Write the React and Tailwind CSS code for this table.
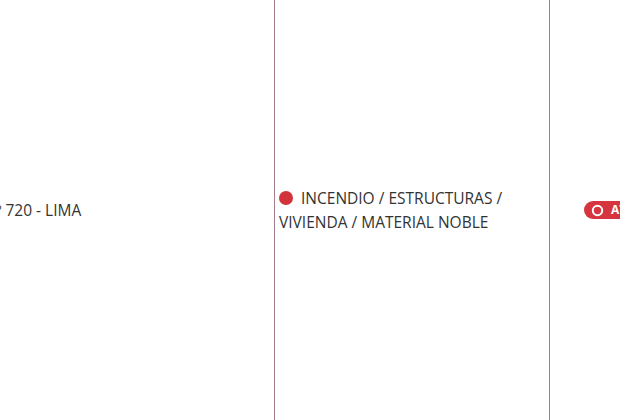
export default function App() {
  return (
    <div className="flex h-[420px] w-[620px] overflow-hidden bg-white text-[15.5px] leading-[24px] text-[#333]" style={{ fontFamily: '"Open Sans", "Noto Sans", sans-serif' }}>
      <div className="flex w-[274px] shrink-0 items-center overflow-hidden">
        <span className="-ml-[16px] whitespace-nowrap">Nº 720 - LIMA</span>
      </div>
      <div className="flex w-[276px] shrink-0 items-center border-x border-[#a47c8a] pl-[4px] pr-[8px]">
        <p>
          <span className="mr-[8px] inline-block h-[14px] w-[14px] rounded-full bg-[#d2323a] align-[-1px]"></span>
          INCENDIO / ESTRUCTURAS / VIVIENDA / MATERIAL NOBLE
        </p>
      </div>
      <div className="flex flex-1 items-center overflow-hidden pl-[34px]">
        <span className="flex h-[18px] items-center gap-[7px] whitespace-nowrap rounded-full bg-[#d6343f] pl-[7px] pr-[8px] text-[12px] font-bold text-white">
          <svg width="13" height="13" viewBox="0 0 13 13">
            <circle cx="6.5" cy="6.5" r="4.7" fill="none" stroke="white" strokeWidth="2" />
          </svg>
          ATENDIENDO
        </span>
      </div>
    </div>
  );
}
